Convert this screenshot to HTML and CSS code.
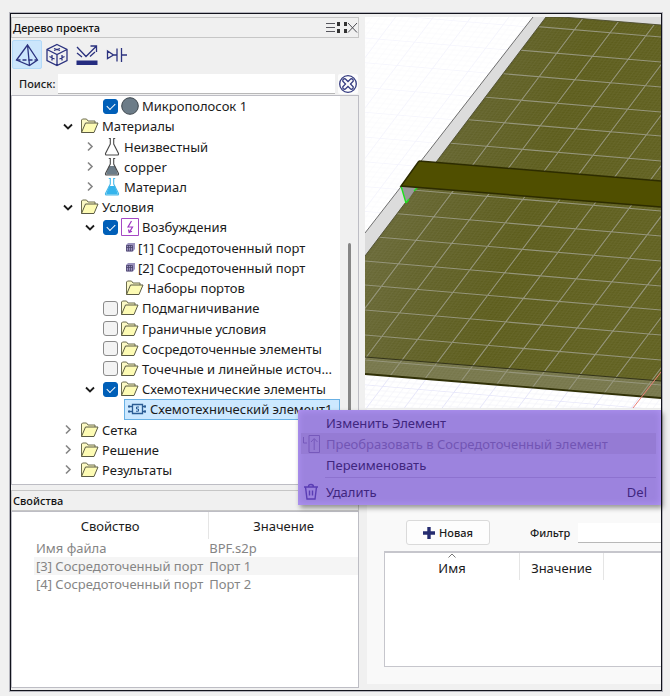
FILE: index.html
```html
<!DOCTYPE html>
<html lang="ru">
<head>
<meta charset="utf-8">
<meta name="viewport" content="width=device-width, initial-scale=1">
<title>Дерево проекта</title>
<link rel="stylesheet" href="styles.css">
</head>
<body>
<svg class="defs" aria-hidden="true">
  <symbol id="folder" viewBox="0 0 18 18">
    <path d="M.5 15.500V3l1-1h4l1.500 2H14v3" fill="#fbf9c4" stroke="#6c6c4e"/>
    <path d="M.5 15.500L4.500 6H17L13 15.500Z" fill="#fdfbb4" stroke="#5b5b45"/>
  </symbol>
  <symbol id="down" viewBox="0 0 20 20"><path d="M6 8.500L10 12.500L14 8.500" fill="none" stroke="#1c1c1c" stroke-width="1.800"/></symbol>
  <symbol id="right" viewBox="0 0 20 20"><path d="M8 5.500L12 9.500L8 13.500" fill="none" stroke="#858585" stroke-width="1.600"/></symbol>
  <symbol id="flask" viewBox="0 0 18 18">
    <path class="liquid" d="M6 8H12L15 16.500H3Z"/>
    <path d="M5.800 .5H7.300V6L2.500 15.500Q2.300 17 3.500 17H14.500Q15.700 17 15.500 15.500L10.700 6V.5H12.200" fill="none" stroke="currentColor" stroke-width="1.100"/>
  </symbol>
  <symbol id="port" viewBox="0 0 9 9">
    <path d="M0 2L2 0H9V6L7 8.500H0Z" fill="#9a92bd"/>
    <path d="M.5 2.500H6.500V8H.5ZM2.500 2V8M4.500 2V8M0 4.500H7" fill="none" stroke="#4a426c" stroke-width=".8"/>
  </symbol>
</svg>

<main class="window">
  <div class="docks">
    <section class="dock">
      <header class="dock-title">
        <h2>Дерево проекта</h2>
        <svg class="title-icons" viewBox="0 0 34 14" aria-hidden="true">
          <path d="M2 2.500H11M2 6.500H11M2 10.500H11" stroke="#55555c"/>
          <path d="M13 1h3v4h-3zM20 1h3v4h-3zM13 8h3v4h-3zM20 8h3v4h-3z" fill="#333"/>
          <path d="M24 2L33 11.500M33 2L24 11.500" stroke="#4c4c52"/>
        </svg>
      </header>
      <div class="toolbar">
        <button class="tool active" aria-label="Геометрия"><svg viewBox="0 0 24 24"><path d="M12.500 2L1.500 17L14.500 22.500L22.500 17ZM12.500 2L14.500 22.500"/><path d="M1.500 17H22" stroke-dasharray="4 2"/></svg></button>
        <button class="tool" aria-label="Сетка"><svg viewBox="0 0 24 24"><path d="M12 1.500L22 6.500V17.500L12 22.500L2 17.500V6.500ZM2 6.500L12 11.500L22 6.500M12 11.500V22.500M9 5.500l6 2M9 7.500l6-2M4.500 13.500l5 2.500M7 12v5.500M14.500 16l5-2.500M17 12v5.500"/></svg></button>
        <button class="tool" aria-label="Отражение"><svg viewBox="0 0 24 24"><path d="M2 4L11 13.500L21 3.500M15.500 3H21.500V9M2 10l5 4M15 13.500l5-4.500"/><path d="M1.500 17.500H22.500V22H1.500Z" fill="#252c80" stroke="none"/></svg></button>
        <button class="tool" aria-label="Схема"><svg viewBox="0 0 24 24"><path d="M2.500 8V15.500L8.500 12ZM8.500 12H12M12 5.500V18.500M16.500 5V19M16.500 12H22"/></svg></button>
      </div>
      <div class="search">
        <label for="search">Поиск:</label>
        <input id="search" type="text">
        <button aria-label="Очистить"><svg viewBox="0 0 20 20"><circle cx="10" cy="10" r="8.300"/><path d="M7.200 4.800L10 7.500L12.800 4.800Q15.500 4.500 15.200 7.200L12.500 10L15.200 12.800Q15.500 15.500 12.800 15.200L10 12.500L7.200 15.200Q4.500 15.500 4.800 12.800L7.500 10L4.800 7.200Q4.500 4.500 7.200 4.800Z"/></svg></button>
      </div>
      <div class="tree-box">
        <ul class="tree">
          <li class="l2"><span class="chev"></span><input type="checkbox" id="c1" checked><svg class="ico" viewBox="0 0 18 18"><circle cx="9" cy="9" r="8.300" fill="#6c7c88" stroke="#3c454c"/></svg><label for="c1">Микрополосок 1</label></li>
          <li class="l1"><svg class="chev"><use href="#down"/></svg><svg class="ico"><use href="#folder"/></svg><span>Материалы</span></li>
          <li class="l2"><svg class="chev"><use href="#right"/></svg><svg class="ico flask empty"><use href="#flask"/></svg><span>Неизвестный</span></li>
          <li class="l2"><svg class="chev"><use href="#right"/></svg><svg class="ico flask gray"><use href="#flask"/></svg><span>copper</span></li>
          <li class="l2"><svg class="chev"><use href="#right"/></svg><svg class="ico flask blue"><use href="#flask"/></svg><span>Материал</span></li>
          <li class="l1"><svg class="chev"><use href="#down"/></svg><svg class="ico"><use href="#folder"/></svg><span>Условия</span></li>
          <li class="l2"><svg class="chev"><use href="#down"/></svg><input type="checkbox" id="c2" checked><svg class="ico" viewBox="0 0 18 18"><path d="M.5 .5H17.500V17.500H.5Z" fill="#fff" stroke="#a548c4"/><path d="M10.500 3L7 9H11.500L8.500 14M7.500 11.500L8.200 14.500L11 13.200" fill="none" stroke="#9d35c2" stroke-width="1.200"/></svg><label for="c2">Возбуждения</label></li>
          <li class="l3"><svg class="ico-port"><use href="#port"/></svg><span>[1] Сосредоточенный порт</span></li>
          <li class="l3"><svg class="ico-port"><use href="#port"/></svg><span>[2] Сосредоточенный порт</span></li>
          <li class="l3"><svg class="ico"><use href="#folder"/></svg><span>Наборы портов</span></li>
          <li class="l2"><span class="chev"></span><input type="checkbox" id="c3"><svg class="ico"><use href="#folder"/></svg><label for="c3">Подмагничивание</label></li>
          <li class="l2"><span class="chev"></span><input type="checkbox" id="c4"><svg class="ico"><use href="#folder"/></svg><label for="c4">Граничные условия</label></li>
          <li class="l2"><span class="chev"></span><input type="checkbox" id="c5"><svg class="ico"><use href="#folder"/></svg><label for="c5">Сосредоточенные элементы</label></li>
          <li class="l2"><span class="chev"></span><input type="checkbox" id="c6"><svg class="ico"><use href="#folder"/></svg><label for="c6">Точечные и линейные источ...</label></li>
          <li class="l2"><svg class="chev"><use href="#down"/></svg><input type="checkbox" id="c7" checked><svg class="ico"><use href="#folder"/></svg><label for="c7">Схемотехнические элементы</label></li>
          <li class="l3 selected"><svg class="ico-chip" viewBox="0 0 20 18"><path d="M5.500 4.500H15.500V13.500H5.500ZM2 6.500H5M2 11.500H5M16 6.500H19M16 11.500H19" fill="none" stroke="#2b5c94" stroke-width="1.300"/><path d="M12 7H9.500V9H11.500V11.200H9" fill="none" stroke="#2b5c94"/><path d="M1 5.500h2v2H1zM1 10.500h2v2H1zM17 5.500h2v2h-2zM17 10.500h2v2h-2z" fill="#2b5c94"/></svg><span>Схемотехнический элемент1</span></li>
          <li class="l1"><svg class="chev"><use href="#right"/></svg><svg class="ico"><use href="#folder"/></svg><span>Сетка</span></li>
          <li class="l1"><svg class="chev"><use href="#right"/></svg><svg class="ico"><use href="#folder"/></svg><span>Решение</span></li>
          <li class="l1"><svg class="chev"><use href="#right"/></svg><svg class="ico"><use href="#folder"/></svg><span>Результаты</span></li>
        </ul>
        <div class="scrollbar"><div class="thumb"></div></div>
      </div>
    </section>

    <section class="dock">
      <header class="dock-title"><h2>Свойства</h2></header>
      <div class="props-box">
        <table class="props">
          <thead><tr><th>Свойство</th><th>Значение</th></tr></thead>
          <tbody>
            <tr><td>Имя файла</td><td>BPF.s2p</td></tr>
            <tr><td>[3] Сосредоточенный порт</td><td>Порт 1</td></tr>
            <tr><td>[4] Сосредоточенный порт</td><td>Порт 2</td></tr>
          </tbody>
        </table>
      </div>
    </section>
  </div>

  <div class="work">
    <div class="view">
    <svg class="scene" viewBox="0 0 296 391" preserveAspectRatio="xMinYMin slice" role="img" aria-label="Трёхмерная модель">
      <defs>
        <linearGradient id="board" x1="0" y1="0" x2="1" y2=".45">
          <stop offset="0" stop-color="#73734a"/><stop offset=".4" stop-color="#62622a"/><stop offset=".65" stop-color="#5c5c1b"/><stop offset="1" stop-color="#60601f"/>
        </linearGradient>
        <pattern id="fine" width="10" height="10" patternUnits="userSpaceOnUse" patternTransform="matrix(3.555 .3 -1.750 2.330 209 13.400)">
          <path d="M0 1H10M0 2H10M0 3H10M0 4H10M0 5H10M0 6H10M0 7H10M0 8H10M0 9H10M1 0V10M2 0V10M3 0V10M4 0V10M5 0V10M6 0V10M7 0V10M8 0V10M9 0V10" stroke="#fff" stroke-width=".2"/>
        </pattern>
        <pattern id="floor" width="10" height="10" patternUnits="userSpaceOnUse" patternTransform="matrix(3.555 .3 -1.750 2.330 209 13.400)">
          <path d="M0 0H10M0 0V10" stroke="#dcdcf8" stroke-width=".5"/><path d="M0 2H10M0 4H10M0 6H10M0 8H10M2 0V10M4 0V10M6 0V10M8 0V10" stroke="#ededf6" stroke-width=".2"/>
        </pattern>
        <clipPath id="clip"><path d="M181 0H197L296 8V381L0 357V239Z"/></clipPath>
      </defs>
      <path d="M0 0H296V391H0Z" fill="#fff"/>
      <path d="M0 0H296V340H0Z" fill="url(#floor)" opacity=".35"/>
      <path d="M0 340H296V391H0Z" fill="url(#floor)" opacity=".8"/>
      <path d="M168 0H296V20L181 60L0 239V216Z" fill="#dcdcdc"/>
      <path d="M168 0L0 216" stroke="#606060" stroke-width=".9"/>
      <path d="M181 0H197L296 8V381L0 357V239Z" fill="url(#board)"/>
      <path d="M0 340L296 364V381L0 357Z" fill="#76764a"/>
      <g clip-path="url(#clip)">
        <path d="M0 0H296V391H0Z" fill="url(#fine)" opacity=".09"/>
        <path d="M0 -5L296 20M0 20L296 45M0 45L296 70M0 70L296 95M0 94L296 119M0 119L296 144M0 144L296 169M0 169L296 194M0 194L296 219M0 219L296 244M0 244L296 269M0 268L296 293M0 293L296 318M0 318L296 343M0 343L296 368M219 0L-75 391M257 0L-37 391M295 0L1 391M332 0L38 391M370 0L76 391M408 0L114 391M446 0L152 391M484 0L190 391M522 0L228 391M560 0L266 391" stroke="#96967c" stroke-width="1.100" fill="none"/>
      </g>
      <path d="M181 0L0 239M181 0H197L296 8" fill="none" stroke="#4b4b30" stroke-width=".9"/>
      <path d="M0 340L296 364" stroke="#34341a"/>
      <path d="M0 357L296 381" stroke="#303006" stroke-width="1.800"/>
      <path d="M36 169L41 186L52 170Z" fill="#9a9a9a"/>
      <path d="M36 169L41 186M49 174L53 170M41 186L44 182" stroke="#1ee01e" stroke-width="1.400"/>
      <path d="M54 144L296 164V190L36 169Z" fill="#504f00"/>
      <path d="M54 144L296 164M296 190L36 169L54 144" fill="none" stroke="#2d2c00" stroke-width="1.500"/>
      <path d="M296 355L268 391" stroke="#e98078"/>
    </svg>
    </div>
    <section class="params">
      <div class="params-bar">
        <button class="new"><svg viewBox="0 0 12 12" aria-hidden="true"><path d="M6 0V12M0 6H12" stroke="#252c70" stroke-width="3.400"/></svg>Новая</button>
        <label for="filter">Фильтр</label>
        <input id="filter" type="text">
      </div>
      <div class="params-table">
        <table>
          <thead><tr><th><svg class="sort" viewBox="0 0 8 5" aria-hidden="true"><path d="M.5 4.500L4 1L7.500 4.500" fill="none" stroke="#777"/></svg>Имя</th><th>Значение</th><th></th></tr></thead>
        </table>
      </div>
    </section>
  </div>

  <div class="menu" role="menu">
    <button role="menuitem"><span class="mi"></span>Изменить Элемент</button>
    <button role="menuitem" class="disabled" disabled><svg class="mi" viewBox="0 0 20 20"><path d="M2.500 3V9H6M8 1.500H18.500V18.500H8ZM13.200 16V5M10 8L13.200 4.500L16.500 8"/></svg>Преобразовать в Сосредоточенный элемент</button>
    <button role="menuitem"><span class="mi"></span>Переименовать</button>
    <hr>
    <button role="menuitem"><svg class="mi trash" viewBox="0 0 20 20"><path d="M3 5H17M4.500 5L6 17H14L15.500 5M7.500 5Q7.500 2.500 10 2.500T12.500 5M8.500 8.500V13.500M11.500 8.500V13.500"/></svg>Удалить<kbd>Del</kbd></button>
  </div>
</main>
</body>
</html>
```
FILE: styles.css
```css
* { box-sizing: border-box; }

body {
  margin: 0;
  min-height: 100vh;
  padding: 13px 8px 5px 10px;
  display: flex;
  background: #f0f0f0;
  color: #1b1b1b;
  font-family: "Noto Sans", "Open Sans", sans-serif;
  font-size: 13px;
  line-height: 18px;
}

button, input { font: inherit; color: inherit; }
h2, ul, table { margin: 0; padding: 0; }
svg { flex: none; overflow: visible; }
.defs { display: none; }

.window {
  position: relative;
  flex: 1;
  display: grid;
  grid-template-columns: 87fr 74fr;
  gap: 6px;
  padding: 3px 0 2px;
  border: 1px solid #12131c;
  outline: 1px solid #b4b4bc;
  background: #f0f0f0;
}

.docks {
  display: grid;
  grid-template-rows: 71fr 30fr;
  gap: 5px;
  min-width: 0;
}

.dock { display: flex; flex-direction: column; min-width: 0; }

.dock-title {
  display: flex;
  justify-content: space-between;
  align-items: center;
  height: 21px;
  padding: 1px 0 0 1px;
  border: 1px solid #c6c6c6;
}
.dock-title h2 { font-size: 11px; font-weight: 500; color: #111; }
.title-icons { width: 34px; height: 14px; fill: none; }

.toolbar { display: flex; padding: 2px 1px 0; }
.tool {
  width: 30px;
  height: 29px;
  padding: 0;
  display: grid;
  place-items: center;
  border: 1px solid transparent;
  border-radius: 2px;
  background: none;
}
.tool.active { background: #cce6fc; border-color: #b4daf8; }
.tool svg { width: 24px; height: 24px; fill: none; stroke: #2b327f; stroke-width: 1.3; }

.search {
  display: flex;
  align-items: center;
  gap: 3px;
  padding: 5px 1px 1px 8px;
  font-size: 11px;
  font-weight: 500;
}
.search input, .params-bar input {
  flex: 1;
  min-width: 0;
  height: 20px;
  border: 0;
  border-bottom: 1px solid #b8b8b8;
  background: #fff;
}
.search button {
  width: 20px;
  height: 20px;
  padding: 0;
  border: 0;
  border-radius: 2px;
  background: #fcfcfc;
}
.search button svg { display: block; width: 20px; height: 20px; fill: none; stroke: #343b80; stroke-width: 1.3; }

.tree-box {
  flex: 1;
  display: flex;
  border: 1px solid #bdbdc4;
  background: #fff;
}
.tree {
  flex: 1;
  display: grid;
  grid-auto-rows: 1fr;
  padding-bottom: 4px;
  list-style: none;
  white-space: nowrap;
}
.tree li { display: flex; align-items: center; gap: 3px; }
.tree .l1 { padding-left: 46px; }
.tree .l2 { padding-left: 68px; }
.tree .l3 { padding-left: 114px; }
.tree .selected {
  margin-left: 112px;
  padding-left: 2px;
  border: 1px solid #68b0e4;
  background: #cce8ff;
}
.chev { width: 20px; height: 20px; flex: none; }
.ico { width: 18px; height: 18px; }
.ico-port { width: 9px; height: 9px; }
.ico-chip { width: 20px; height: 18px; }
.flask { color: #4a4a4a; }
.empty { fill: none; }
.gray { fill: #6c7c88; }
.blue { fill: #35b4ec; color: #48b8e8; }

.tree input {
  appearance: none;
  flex: none;
  width: 15px;
  height: 15px;
  margin: 0;
  border: 1px solid #8a8a8a;
  border-radius: 3px;
  background: #f3f3f3;
  display: grid;
  place-items: center;
}
.tree input:checked { background: #005fb8; border-color: #005fb8; }
.tree input:checked::after {
  content: "";
  width: 7px;
  height: 4px;
  border: solid #fff;
  border-width: 0 0 1px 1px;
  transform: translateY(-1px) rotate(-45deg);
}

.scrollbar { width: 18px; padding: 147px 7px 16px 8px; background: #f0f0f0; }
.thumb { height: 100%; border-radius: 2px; background: #868686; }

.props-box {
  flex: 1;
  border: 1px solid #bdbdc4;
  background: #fff;
}
.props {
  width: 100%;
  table-layout: fixed;
  border-collapse: separate;
  border-spacing: 0;
  white-space: nowrap;
}
.props th { height: 27px; padding: 0; font-weight: 400; }
.props th:first-child { width: 57%; border-right: 1px solid #e5e5e5; }
.props td { height: 18px; padding: 0; color: #858585; background-clip: padding-box; line-height: 18px; }
.props td:first-child { padding-left: 2px; border-left: 22px solid transparent; }
.props tr:nth-child(even) td { background-color: #f5f5f5; }

.work {
  display: grid;
  grid-template-columns: minmax(0, 1fr);
  grid-template-rows: minmax(0, 391fr) minmax(0, 280fr);
  min-width: 0;
}
.view { contain: size; min-height: 0; overflow: hidden; }
.scene { display: block; width: 100%; height: 100%; }

.params {
  display: flex;
  flex-direction: column;
  gap: 6px;
  margin: 1px 0 4px 2px;
  padding: 111px 0 17px 17px;
  background: #f9f9f9;
}
.params-bar {
  display: flex;
  align-items: center;
  padding-left: 22px;
  font-size: 11px;
  font-weight: 500;
}
.params-bar label { margin: 0 8px 0 40px; }
.new {
  display: flex;
  align-items: center;
  justify-content: center;
  gap: 4px;
  width: 84px;
  height: 25px;
  padding: 0;
  border: 1px solid #dadada;
  border-radius: 3px;
  background: #fdfdfd;
}
.new svg { width: 12px; height: 12px; }
.params-table {
  flex: 1;
  border: solid #c6c6cc;
  border-width: 2px 0 1px 1px;
  background: #fff;
}
.params-table table { width: 100%; table-layout: fixed; border-spacing: 0; }
.params-table th { position: relative; height: 27px; padding: 2px 0 0; font-weight: 400; }
.params-table th:nth-child(1) { width: 134px; }
.params-table th:nth-child(2) { width: 84px; }
.params-table th + th { border-left: 1px solid #e5e5e5; }
.sort { position: absolute; top: 0; left: 50%; width: 8px; height: 5px; margin-left: -4px; }

.menu {
  position: absolute;
  top: 396px;
  left: 287px;
  right: 0;
  padding: 2px 5px 3px 3px;
  display: flex;
  flex-direction: column;
  background: #9c83de;
  box-shadow: inset 0 0 7px #b296f6, 2px 3px 5px rgba(0, 0, 0, .4);
  color: #40267f;
}
.menu button {
  display: flex;
  align-items: center;
  gap: 5px;
  height: 21px;
  padding: 0;
  border: 0;
  background: none;
  text-align: left;
  white-space: nowrap;
}
.menu .disabled { color: #7255b4; background: #957bd4; }
.mi { width: 20px; height: 20px; flex: none; fill: none; stroke: #7659bb; }
.trash { stroke: #5a3db4; stroke-width: 1.4; }
.menu hr { width: calc(100% - 24px); height: 1px; margin: 2px 0 3px 24px; border: 0; background: #8d72cf; }
.menu kbd { margin-left: auto; margin-right: 9px; font: inherit; }
```
